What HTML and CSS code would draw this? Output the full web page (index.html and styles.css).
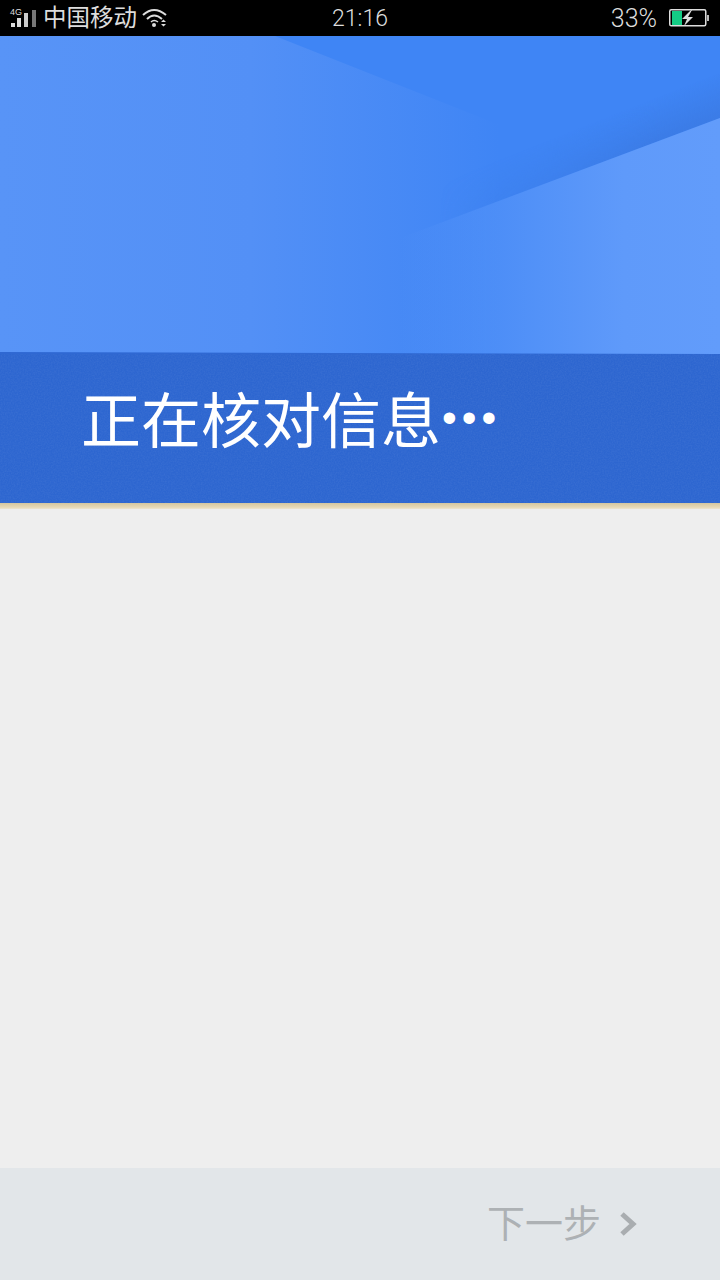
FILE: index.html
```html
<!DOCTYPE html>
<html lang="zh-CN">
<head>
    <meta charset="UTF-8">
    <meta name="viewport" content="width=device-width, initial-scale=1.0">
    <title>正在核对信息</title>
    <link rel="stylesheet" href="styles.css">
</head>
<body>
    <div class="status-bar">
        <div class="status-left">
            <svg class="signal-icon" width="28" height="22" viewBox="0 0 28 22">
                <text x="1" y="8" class="signal-label">4G</text>
                <rect x="2" y="16" width="4" height="4" fill="#ddd"/>
                <rect x="8" y="11" width="4" height="9" fill="#ddd"/>
                <rect x="15" y="6" width="4" height="14" fill="#ccc"/>
                <rect x="23" y="3" width="4" height="17" fill="#777"/>
            </svg>
            <span class="carrier">中国移动</span>
            <svg class="wifi-icon" width="26" height="20" viewBox="0 0 26 20" fill="none" stroke="#ddd">
                <path d="M1 7 Q12 -3 24 7" stroke-width="2"/>
                <path d="M5 11 Q12 4 20 11" stroke-width="2"/>
                <path d="M9 14 Q12 11 16 14" stroke-width="1.500"/>
                <circle cx="12" cy="17" r="2" fill="#ddd" stroke="none"/>
                <path d="M19 14 L21.500 11.500 L24 14 Z M19 16 L21.500 18.500 L24 16 Z" fill="#ddd" stroke="none"/>
            </svg>
        </div>
        <div class="clock">21:16</div>
        <div class="status-right">
            <span class="battery-text">33%</span>
            <svg class="battery-icon" width="40" height="18" viewBox="0 0 40 18">
                <rect x="0.750" y="0.750" width="36" height="16" rx="1.500" fill="none" stroke="#ddd" stroke-width="1.500"/>
                <rect x="3" y="2" width="10" height="14" fill="#14cc85"/>
                <path d="M22 1 L13 10 L18 10 L15 17 L24 8 L19 8 L23 1 Z" fill="#ddd"/>
                <rect x="38" y="6" width="2" height="6" fill="#bbb"/>
            </svg>
        </div>
    </div>

    <div class="hero">
        <svg class="hero-art" width="720" height="318" viewBox="0 0 720 318">
            <defs>
                <linearGradient id="leftPanel" gradientUnits="userSpaceOnUse" x1="0" y1="0" x2="500" y2="0">
                    <stop offset="0" stop-color="#5894f7"/>
                    <stop offset="0.5" stop-color="#5390f6"/>
                    <stop offset="1" stop-color="#5390f6" stop-opacity="0"/>
                </linearGradient>
                <linearGradient id="rightPanel" gradientUnits="userSpaceOnUse" x1="720" y1="0" x2="400" y2="0">
                    <stop offset="0" stop-color="#629cfb"/>
                    <stop offset="0.3" stop-color="#5f9afa"/>
                    <stop offset="1" stop-color="#5f9afa" stop-opacity="0"/>
                </linearGradient>
                <linearGradient id="edgeShade" gradientUnits="userSpaceOnUse" x1="650" y1="108" x2="635" y2="70">
                    <stop offset="0" stop-color="#3a78e0" stop-opacity="0.7"/>
                    <stop offset="1" stop-color="#3a78e0" stop-opacity="0"/>
                </linearGradient>
                <linearGradient id="shadeFade" gradientUnits="userSpaceOnUse" x1="440" y1="0" x2="660" y2="0">
                    <stop offset="0" stop-color="#000"/>
                    <stop offset="1" stop-color="#fff"/>
                </linearGradient>
                <mask id="shadeMask" maskUnits="userSpaceOnUse" x="0" y="0" width="720" height="318">
                    <rect width="720" height="318" fill="url(#shadeFade)"/>
                </mask>
            </defs>
            <polygon points="0,0 275,0 520,97 520,318 0,318" fill="url(#leftPanel)"/>
            <polygon points="400,202 400,100 720,-20 720,82" fill="url(#edgeShade)" mask="url(#shadeMask)"/>
            <polygon points="720,82 720,318 400,318 400,202" fill="url(#rightPanel)"/>
            <polygon points="0,316 720,318 0,318" fill="#2f68d2"/>
        </svg>
    </div>

    <div class="banner">
        <svg class="banner-grain" width="720" height="149">
            <filter id="grain">
                <feTurbulence type="fractalNoise" baseFrequency="0.7" numOctaves="2"/>
                <feColorMatrix values="0 0 0 0 1  0 0 0 0 1  0 0 0 0 1  0 0 0 0.5 -0.15"/>
            </filter>
            <rect width="720" height="149" filter="url(#grain)" opacity="0.18"/>
        </svg>
        <h1 class="banner-title">正在核对信息<span class="dots">•••</span></h1>
    </div>
    <div class="banner-edge"></div>

    <div class="content"></div>

    <div class="footer">
        <span class="next-label">下一步</span>
        <svg class="next-arrow" width="18" height="26" viewBox="0 0 18 26" fill="none">
            <path d="M3 3 L14 13 L3 23" stroke="#a9adb0" stroke-width="5"/>
        </svg>
    </div>
</body>
</html>
```
FILE: styles.css
```css
* {
    box-sizing: border-box;
}

html, body {
    height: 100%;
}

body {
    margin: 0;
    height: 1280px;
    display: flex;
    flex-direction: column;
    background-color: #eeeeee;
    font-family: "Noto Sans CJK SC", "Liberation Sans", sans-serif;
    overflow: hidden;
}

.status-bar {
    flex: 0 0 36px;
    position: relative;
    display: flex;
    justify-content: space-between;
    align-items: center;
    padding: 0 11px 0 9px;
    background: #000;
    color: #ddd;
}

.status-left,
.status-right {
    display: flex;
    align-items: center;
}

.signal-label {
    font-family: "Liberation Sans", sans-serif;
    font-size: 9px;
    fill: #ddd;
}

.carrier {
    margin-left: 6px;
    margin-top: -5px;
    font-size: 23.500px;
    line-height: 30px;
}

.wifi-icon {
    margin-left: 5px;
}

.clock {
    position: absolute;
    left: 0;
    right: 0;
    text-align: center;
    font-family: Roboto, sans-serif;
    font-size: 23px;
    font-weight: 300;
}

.battery-text {
    font-family: Roboto, sans-serif;
    font-size: 25px;
    font-weight: 300;
}

.battery-icon {
    margin-left: 12px;
}

.hero {
    flex: 0 0 318px;
    position: relative;
    background: #3f85f5;
    overflow: hidden;
}

.hero-art {
    position: absolute;
    left: 0;
    top: 0;
}

.banner {
    flex: 0 0 149px;
    position: relative;
    padding: 18px 0 0 81px;
    background: #2d66d0;
}

.banner-grain {
    position: absolute;
    left: 0;
    top: 0;
}

.banner-title {
    position: relative;
    margin: 0;
    font-size: 60px;
    line-height: 90px;
    font-weight: 400;
    color: #fff;
    white-space: nowrap;
}

.dots {
    margin-left: 1px;
    font-family: "Liberation Sans", sans-serif;
    font-size: 42px;
    letter-spacing: 5px;
    vertical-align: 11px;
}

.banner-edge {
    flex: 0 0 6px;
    background: linear-gradient(180deg, #d4c6a0 0%, #e6d8b5 70%, #ece5d2 100%);
}

.content {
    flex: 1;
    background: #eeeeee;
}

.footer {
    flex: 0 0 112px;
    display: flex;
    justify-content: flex-end;
    align-items: center;
    padding: 0 83px 0 0;
    background: #e2e6e9;
}

.next-label {
    margin-bottom: 6px;
    font-size: 38px;
    line-height: 50px;
    color: #adb1b4;
}

.next-arrow {
    margin-left: 18px;
}
```
